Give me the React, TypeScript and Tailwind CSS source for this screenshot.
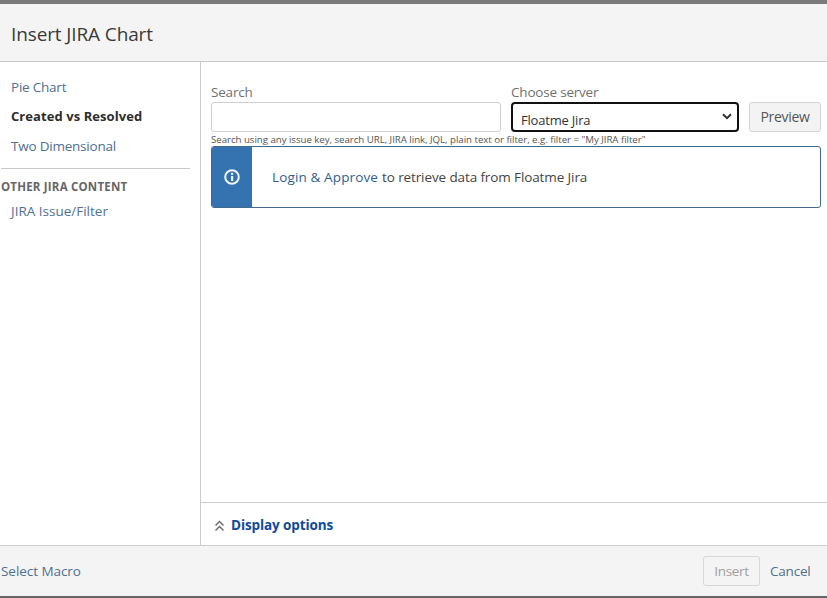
import React from "react";

export default function App() {
  return (
    <div className="w-[827px] h-[598px] flex flex-col overflow-hidden bg-white font-['Open_Sans','Noto_Sans',sans-serif] text-[14px] text-[#333333]">
      <div className="h-[4px] bg-[#7b7b7b]" />
      <header className="h-[58px] shrink-0 flex items-center pl-[11px] pt-[3px] bg-[#f4f4f4] border-b border-[#c8c8c8]">
        <h1 className="text-[19px] tracking-[-0.12px] text-[#3a3a3a]">Insert JIRA Chart</h1>
      </header>
      <div className="flex-1 flex min-h-0">
        <aside className="w-[201px] shrink-0 border-r border-[#cccccc] pt-[15px]">
          <ul className="pl-[11px] text-[13.5px] tracking-[-0.22px] text-[#4f7092]">
            <li className="h-[20px] leading-[20px]">Pie Chart</li>
            <li className="h-[20px] leading-[20px] mt-[9px] font-bold text-[#2d2d2d] text-[13px] tracking-[0.07px]">Created vs Resolved</li>
            <li className="h-[20px] leading-[20px] mt-[10px]">Two Dimensional</li>
          </ul>
          <div className="h-px bg-[#c8c8c8] mt-[12px] ml-[1px] mr-[10px]" />
          <div className="mt-[10px] pl-[1px] h-[16px] leading-[16px] text-[11.5px] font-bold text-[#666666] tracking-[0.2px]">OTHER JIRA CONTENT</div>
          <div className="mt-[6px] pl-[11px] h-[20px] leading-[20px] text-[13.5px] tracking-[0px] text-[#4f7092]">JIRA Issue/Filter</div>
        </aside>
        <main className="flex-1 flex flex-col min-w-0">
          <div className="flex-1 pl-[10px] pr-[6px] pt-[21px]">
            <div className="flex items-end">
              <div className="w-[290px]">
                <label className="block h-[19px] leading-[19px] text-[13.5px] tracking-[-0.2px] text-[#707070]">Search</label>
                <input className="block w-full h-[30px] bg-white border border-[#cfcfcf] rounded-[3px]" />
              </div>
              <div className="w-[228px] ml-[10px]">
                <label className="block h-[19px] leading-[19px] text-[13.5px] tracking-[-0.2px] text-[#707070]">Choose server</label>
                <div className="relative h-[30px] border-2 border-[#111111] rounded-[4px] bg-white pl-[8px] pt-[7px] leading-[19px] text-[13px] tracking-[-0.2px] text-[#333333]">
                  Floatme Jira
                  <svg className="absolute right-[4px] top-[8px]" width="12" height="9" viewBox="0 0 12 9" fill="none">
                    <path d="M2 2.2L6 6.2L10 2.2" stroke="#333333" strokeWidth="2" />
                  </svg>
                </div>
              </div>
              <button className="ml-[10px] w-[72px] h-[30px] pb-[2px] bg-[#f3f3f3] border border-[#d4d4d4] rounded-[3px] text-[14px] tracking-[-0.3px] text-[#555555]">Preview</button>
            </div>
            <p className="h-[14px] leading-[15px] text-[9.7px] text-[#555555] tracking-[-0.04px] whitespace-nowrap">Search using any issue key, search URL, JIRA link, JQL, plain text or filter, e.g. filter = "My JIRA filter"</p>
            <div className="flex h-[62px] w-[610px] border border-[#3f6a8a] rounded-[3px] overflow-hidden">
              <div className="w-[40px] shrink-0 bg-[#3572b0] flex items-center justify-center">
                <svg width="18" height="18" viewBox="0 0 18 18" fill="none">
                  <circle cx="9" cy="9" r="6.8" stroke="#eef4fa" strokeWidth="2" />
                  <rect x="8" y="8" width="2.2" height="5" fill="#eef4fa" />
                  <rect x="8" y="4.8" width="2.2" height="2.1" fill="#eef4fa" />
                </svg>
              </div>
              <div className="flex-1 flex items-center pl-[20px] text-[13.5px] tracking-[-0.11px] text-[#444444]">
                <span className="text-[#2f5f8f] tracking-[0.13px]">Login &amp; Approve</span>
                <span className="ml-[4px]">to retrieve data from Floatme Jira</span>
              </div>
            </div>
          </div>
          <div className="h-[43px] shrink-0 flex items-center pl-[13px] pt-[3px] border-t border-[#cccccc]">
            <svg width="11" height="12" viewBox="0 0 11 12" fill="none">
              <path d="M1.5 5.5L5.5 1.5L9.5 5.5M1.5 10.5L5.5 6.5L9.5 10.5" stroke="#666666" strokeWidth="1.4" />
            </svg>
            <span className="ml-[6px] text-[13.5px] font-bold tracking-[-0.1px] text-[#0f4a9c]">Display options</span>
          </div>
        </main>
      </div>
      <footer className="h-[53px] shrink-0 flex items-center pl-[1px] pr-[16px] bg-[#f4f4f4] border-t border-[#cccccc] border-b-[2px] border-b-[#666666]">
        <span className="text-[13.5px] tracking-[-0.05px] text-[#4f7092]">Select Macro</span>
        <button className="ml-auto w-[57px] h-[30px] bg-[#f4f4f4] border border-[#d8d8d8] rounded-[3px] text-[13.5px] tracking-[-0.3px] text-[#a0a0a0]">Insert</button>
        <span className="ml-[10px] w-[41px] text-[13.5px] tracking-[-0.2px] text-[#4f7092]">Cancel</span>
      </footer>
    </div>
  );
}
